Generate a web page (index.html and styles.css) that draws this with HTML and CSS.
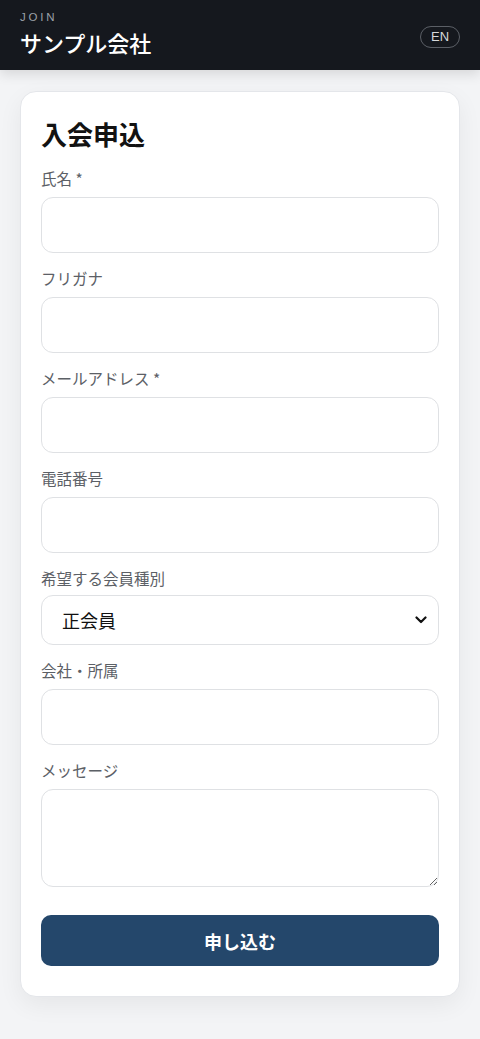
FILE: index.html
```html
<!DOCTYPE html>
<html lang="ja">
<head>
<meta charset="utf-8">
<meta name="viewport" content="width=device-width, initial-scale=1">
<title>入会申込</title>
<link rel="stylesheet" href="styles.css">
</head>
<body>
<header class="topbar">
  <div class="brand">
    <div class="brand-sub">JOIN</div>
    <div class="brand-name">サンプル会社</div>
  </div>
  <button class="lang" type="button">EN</button>
</header>
<main class="page">
  <form class="card">
    <h1 class="title">入会申込</h1>
    <div class="field">
      <label class="label">氏名 *</label>
      <input class="input" type="text">
    </div>
    <div class="field">
      <label class="label">フリガナ</label>
      <input class="input" type="text">
    </div>
    <div class="field">
      <label class="label">メールアドレス *</label>
      <input class="input" type="email">
    </div>
    <div class="field">
      <label class="label">電話番号</label>
      <input class="input" type="tel">
    </div>
    <div class="field">
      <label class="label">希望する会員種別</label>
      <div class="select-wrap">
        <select class="select">
          <option>正会員</option>
          <option>賛助会員</option>
        </select>
        <svg class="chev" viewBox="0 0 12 8" width="12" height="8"><path d="M1.5 1.5 L6 6 L10.5 1.5" fill="none" stroke="#111" stroke-width="2.2" stroke-linecap="round" stroke-linejoin="round"/></svg>
      </div>
    </div>
    <div class="field">
      <label class="label">会社・所属</label>
      <input class="input" type="text">
    </div>
    <div class="field">
      <label class="label">メッセージ</label>
      <textarea class="textarea"></textarea>
    </div>
    <button class="submit" type="button">申し込む</button>
  </form>
</main>
</body>
</html>
```
FILE: styles.css
```css
* { box-sizing: border-box; }
html, body { margin: 0; padding: 0; }
body {
  background: #f3f4f6;
  font-family: "Noto Sans CJK JP", "Noto Sans", "Liberation Sans", sans-serif;
  color: #111;
}
.topbar {
  height: 70px;
  background: #15181e;
  display: flex;
  align-items: center;
  justify-content: space-between;
  padding: 0 20px;
  box-shadow: 0 4px 12px rgba(0,0,0,0.12);
}
.brand { display: flex; flex-direction: column; }
.brand-sub {
  font-family: "Liberation Sans", "Noto Sans", sans-serif;
  font-size: 11.5px;
  letter-spacing: 2.8px;
  color: #9ca1a9;
  line-height: 14px;
  margin-top: -4px;
}
.brand-name {
  font-size: 22px;
  font-weight: 500;
  color: #ffffff;
  line-height: 28px;
  margin-top: 4px;
}
.lang {
  font-family: "Liberation Sans", "Noto Sans", sans-serif;
  background: transparent;
  border: 1px solid #5b5f66;
  color: #d6d8db;
  border-radius: 12px;
  height: 22px;
  width: 40px;
  font-size: 13px;
  padding: 0;
  line-height: 20px;
  margin-top: 3px;
}
.page { padding: 21px 20px 40px; }
.card {
  background: #ffffff;
  border-radius: 16px;
  border: 1px solid #e4e6ea;
  box-shadow: 0 8px 24px rgba(0,0,0,0.06);
  padding: 23px 20px 30px;
  display: flex;
  flex-direction: column;
}
.title {
  margin: 0 0 14px;
  font-size: 26px;
  font-weight: 700;
  line-height: 38px;
  color: #121212;
}
.field { display: flex; flex-direction: column; margin-bottom: 14px; }
.label {
  font-size: 15.5px;
  line-height: 22px;
  color: #5c6066;
  margin-bottom: 8px;
}
.input, .select, .textarea {
  width: 100%;
  border: 1px solid #dfe1e4;
  border-radius: 12px;
  background: #fff;
  font-family: inherit;
  outline: none;
}
.input { height: 56px; }
.select-wrap { position: relative; margin-top: -2px; }
.select {
  height: 50px;
  appearance: none;
  -webkit-appearance: none;
  font-size: 18px;
  color: #111;
  padding: 0 20px;
}
.chev { position: absolute; right: 12px; top: 21px; pointer-events: none; }
.textarea { height: 98px; resize: vertical; display: block; }
.submit {
  margin-top: 14px;
  height: 51px;
  border: none;
  border-radius: 10px;
  background: #24476b;
  color: #fff;
  font-family: inherit;
  font-size: 18px;
  font-weight: 700;
}
```
